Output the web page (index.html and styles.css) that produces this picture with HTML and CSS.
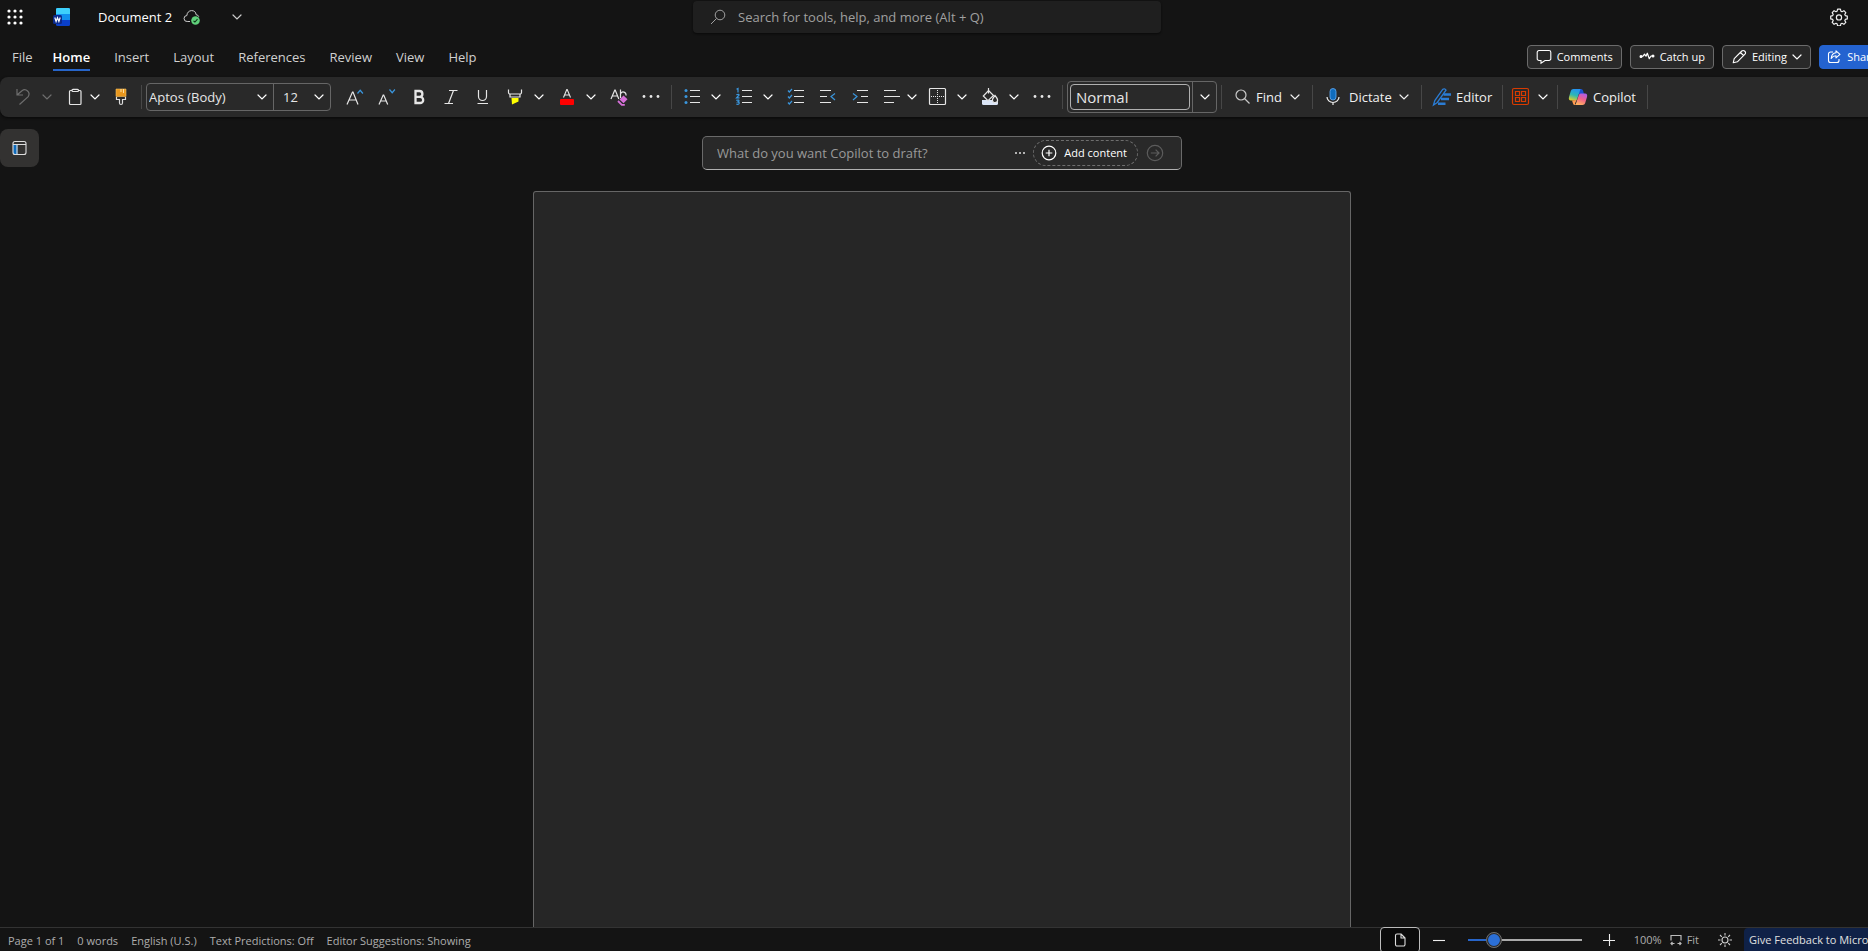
FILE: index.html
```html
<!DOCTYPE html>
<html lang="en">
<head>
<meta charset="utf-8">
<title>Document 2 - Word</title>
<link rel="stylesheet" href="styles.css">
</head>
<body>
<svg class="defs" aria-hidden="true">
  <symbol id="chev" viewBox="0 0 10 10"><path d="M1 3l4 4 4-4" fill="none" stroke="currentColor" stroke-width="1.2" stroke-linecap="round"/></symbol>
  <symbol id="dots" viewBox="0 0 20 20"><circle cx="3" cy="9.5" r="1.4"/><circle cx="10" cy="9.5" r="1.4"/><circle cx="17" cy="9.5" r="1.4"/></symbol>
</svg>
<div class="app">
  <header class="title-bar">
    <div class="title-left">
      <button class="plain waffle" aria-label="App launcher">
        <svg class="i16" viewBox="0 0 16 16" fill="#fff"><circle cx="2" cy="2" r="1.6"/><circle cx="8" cy="2" r="1.6"/><circle cx="14" cy="2" r="1.6"/><circle cx="2" cy="8" r="1.6"/><circle cx="8" cy="8" r="1.6"/><circle cx="14" cy="8" r="1.6"/><circle cx="2" cy="14" r="1.6"/><circle cx="8" cy="14" r="1.6"/><circle cx="14" cy="14" r="1.6"/></svg>
      </button>
      <svg class="logo" viewBox="0 0 18 18"><rect x="3" width="14" height="18" rx="1.5" fill="#0a3fc9"/><path d="M4.500 0h11a1.500 1.500 0 0 1 1.500 1.500V12H3V1.500A1.500 1.500 0 0 1 4.500 0z" fill="#1190ee"/><path d="M4.500 0h11a1.500 1.500 0 0 1 1.500 1.500V6H3V1.500A1.500 1.500 0 0 1 4.500 0z" fill="#3dd0fb"/><rect y="7" width="9" height="9" rx="1.500" fill="#0b2a8c"/><path d="M1.800 9.500l1.300 4 1.400-3.800 1.400 3.800 1.300-4" fill="none" stroke="#fff" stroke-width="1.200"/></svg>
      <button class="plain doc-name">Document 2
        <svg class="cloud" viewBox="0 0 18 16"><path d="M7 12.500H4.200a3 3 0 0 1-.3-6A4.800 4.800 0 0 1 8.500 1.600a4.600 4.600 0 0 1 4.600 4.100 3 3 0 0 1 2.700 2" fill="none" stroke="#ccc"/><circle cx="12.500" cy="11.500" r="4.300" fill="#5fd07a"/><path d="M10.500 11.800l1.400 1.200 2.600-2.800" fill="none" stroke="#10331a" stroke-width="1.100"/></svg>
      </button>
      <button class="plain name-more" aria-label="File name options"><svg class="i10"><use href="#chev"/></svg></button>
    </div>
    <label class="search">
      <svg class="i16" viewBox="0 0 16 16" fill="none" stroke="#a0a0a0"><circle cx="10" cy="6" r="4.800"/><path d="M6.500 9.500L1 15"/></svg>
      <input type="text" aria-label="Search" placeholder="Search for tools, help, and more (Alt + Q)">
    </label>
    <div class="title-right">
      <button class="plain" aria-label="Settings"><svg class="i18" viewBox="0 0 18 18" fill="none" stroke="#f0f0f0" stroke-width="1.200" stroke-linejoin="round"><path d="M7.600 1.200h2.800l.5 2 1.100.5 1.900-1 1.900 1.900-1 1.900.5 1.100 2 .5v2.800l-2 .5-.5 1.100 1 1.900-1.900 1.900-1.900-1-1.100.5-.5 2H7.600l-.5-2-1.100-.5-1.900 1-1.900-1.900 1-1.900-.5-1.100-2-.5V8.100l2-.5.500-1.100-1-1.900 1.900-1.900 1.900 1 1.100-.500z"/><circle cx="9" cy="9.400" r="2.600"/></svg></button>
    </div>
  </header>

  <nav class="tab-bar">
    <div class="tabs">
      <button class="tab file">File</button><button class="tab active">Home</button><button class="tab">Insert</button><button class="tab">Layout</button><button class="tab">References</button><button class="tab">Review</button><button class="tab">View</button><button class="tab">Help</button>
    </div>
    <div class="actions">
      <button class="action"><svg class="i16" viewBox="0 0 16 16" fill="none" stroke="currentColor" stroke-width="1.100"><path d="M3 1.500h10a1.800 1.800 0 0 1 1.800 1.800v6.400A1.800 1.800 0 0 1 13 11.500H9L5 14.300v-2.800H3a1.800 1.800 0 0 1-1.800-1.800V3.300A1.800 1.800 0 0 1 3 1.500z"/></svg>Comments</button>
      <button class="action"><svg class="i16" viewBox="0 0 16 16" fill="none" stroke="currentColor" stroke-width="1.200" stroke-linecap="round" stroke-linejoin="round"><path d="M2 7.500l2-.3 1.500-2 1.500 2M7 7.200l1.300-3 2 5.500 1.700-2.700h2"/><circle cx="2" cy="7.500" r=".9" fill="currentColor"/><circle cx="14" cy="7" r=".9" fill="currentColor"/></svg>Catch up</button>
      <button class="action"><svg class="i16" viewBox="0 0 16 16" fill="none" stroke="currentColor" stroke-width="1.100" stroke-linejoin="round"><path d="M2.200 13.800l1-4.200 7.600-7.600a1.900 1.900 0 0 1 2.700 0l.5.500a1.900 1.900 0 0 1 0 2.700l-7.600 7.600zM9.500 3.500l3 3"/></svg>Editing<svg class="i10"><use href="#chev"/></svg></button>
      <button class="action share"><svg class="i16" viewBox="0 0 16 16" fill="none" stroke="currentColor" stroke-width="1.100" stroke-linejoin="round"><path d="M7 3H4.500A2 2 0 0 0 2.500 5v6.500a2 2 0 0 0 2 2H11a2 2 0 0 0 2-2V10"/><path d="M10 1.800l4 3.500-4 3.500V6.800c-2 0-3.500.7-4.800 2.700.2-3 1.800-5.400 4.800-5.700z"/></svg>Share</button>
    </div>
  </nav>

  <div class="ribbon" role="toolbar" aria-label="Home">
    <div class="split gap dim"><button class="tool" aria-label="Undo"><svg class="i20" viewBox="0 0 20 20" fill="none" stroke="currentColor" stroke-width="1.200"><path d="M4 2v6h6M4.300 7.700L9 3.800a4.300 4.300 0 0 1 6.200 5.800L6.500 17.500"/></svg></button><button class="more" aria-label="Undo options"><svg class="i10"><use href="#chev"/></svg></button></div>
    <div class="split tight"><button class="tool" aria-label="Paste"><svg class="i20" viewBox="0 0 20 20" fill="none" stroke="currentColor" stroke-width="1.200"><path d="M7 3.500H5.500a1 1 0 0 0-1 1v12a1 1 0 0 0 1 1h9.500a1 1 0 0 0 1-1v-12a1 1 0 0 0-1-1H13.500"/><rect x="7" y="2.300" width="6.500" height="2.200" rx="1"/></svg></button><button class="more" aria-label="Paste options"><svg class="i10"><use href="#chev"/></svg></button></div>
    <button class="tool" aria-label="Format painter"><svg class="i20" viewBox="0 0 20 20" fill="none"><path d="M5 2h10v7.500H5z" fill="#e8971e" stroke="#f5c060" stroke-width=".6"/><path d="M10 2v3M12.500 2v4" stroke="#ffe0a0"/><path d="M5.500 10v2.500h3V16a1.500 1.500 0 0 0 3 0v-3.500h3V10" stroke="#ddd" stroke-width="1.200"/></svg></button>
    <span class="rule"></span>
    <div class="combo">
      <input class="font-name" type="text" aria-label="Font" value="Aptos (Body)"><button class="combo-more" aria-label="Choose font"><svg class="i10"><use href="#chev"/></svg></button>
      <input class="font-size" type="text" aria-label="Font size" value="12"><button class="combo-more" aria-label="Choose size"><svg class="i10"><use href="#chev"/></svg></button>
    </div>
    <div class="text-tools">
      <button class="tool" aria-label="Grow font"><svg class="i20" viewBox="0 0 20 20" fill="none" stroke="currentColor" stroke-width="1.200"><path d="M2 17.500L7.500 5h.5l5 12.500M4 13h7.500"/><path d="M12.500 6.500l2.700-3.200 2.700 3.200" stroke="#3a96dd"/></svg></button>
      <button class="tool" aria-label="Shrink font"><svg class="i20" viewBox="0 0 20 20" fill="none" stroke="currentColor" stroke-width="1.200"><path d="M2 17.500L6.200 8h.5l4 9.500M3.500 14h6"/><path d="M12.500 2.500l2.700 3.200 2.700-3.200" stroke="#3a96dd"/></svg></button>
      <button class="tool" aria-label="Bold"><svg class="i20" viewBox="0 0 20 20" fill="none" stroke="currentColor" stroke-width="2.300"><path d="M6.500 4h4a2.900 2.900 0 0 1 0 5.800h-4zM6.500 9.800h4.600a3.100 3.100 0 0 1 0 6.200H6.500z"/></svg></button>
      <button class="tool" aria-label="Italic"><svg class="i20" viewBox="0 0 20 20" fill="none" stroke="currentColor" stroke-width="1.200"><path d="M8 3.500h8.500M3.500 16.500H12M12.500 3.500l-5 13"/></svg></button>
      <button class="tool" aria-label="Underline"><svg class="i20" viewBox="0 0 20 20" fill="none" stroke="currentColor" stroke-width="1.200"><path d="M5.500 3v6.500a4 4 0 0 0 8 0V3M4.500 16.500H15"/></svg></button>
      <div class="split gap"><button class="tool" aria-label="Highlight"><svg class="i20" viewBox="0 0 20 20" fill="none" stroke="currentColor" stroke-width="1.200"><path d="M3.500 2.500v3a1.500 1.500 0 0 0 1.500 1.500h10a1.500 1.500 0 0 0 1.500-1.500v-3M5 7v3h10V7"/><path d="M6.500 11h7v3.500L7 17.500z" fill="#ffff00" stroke="none"/></svg></button><button class="more" aria-label="Highlight colors"><svg class="i10"><use href="#chev"/></svg></button></div>
      <div class="split gap"><button class="tool" aria-label="Font color"><svg class="i20" viewBox="0 0 20 20" fill="none" stroke="currentColor" stroke-width="1.100"><path d="M6.500 10.500L9.800 2.500h.4l3.300 8M7.500 8h5"/><rect x="3" y="12" width="14" height="6" rx="1" fill="#ff0000" stroke="none"/></svg></button><button class="more" aria-label="Font colors"><svg class="i10"><use href="#chev"/></svg></button></div>
      <button class="tool" aria-label="Clear formatting"><svg class="i20" viewBox="0 0 20 20" fill="none" stroke="currentColor" stroke-width="1.200"><path d="M2 12L5.800 3h.4l3.600 9M3.300 9h5.500M11.500 2.500V11M11.500 7a2.800 2.800 0 0 1 5.400 1.500"/><path d="M14.500 8.500l4 3.800-4 4-4-3.800z" fill="#d670d9" stroke="none"/><path d="M9 14l3.800 3.800h3" stroke="#d670d9" stroke-width="1.800"/></svg></button>
      <button class="tool" aria-label="More font options"><svg class="i20" fill="currentColor"><use href="#dots"/></svg></button>
    </div>
    <span class="rule"></span>
    <div class="split gap"><button class="tool" aria-label="Bullets"><svg class="i20" viewBox="0 0 20 20" stroke="currentColor" stroke-width="1.200"><path d="M8 3.500h10M8 9.500h10M8 15.500h10"/><g fill="#3a96dd" stroke="none"><circle cx="4" cy="3.500" r="1.500"/><circle cx="4" cy="9.500" r="1.500"/><circle cx="4" cy="15.500" r="1.500"/></g></svg></button><button class="more" aria-label="Bullet styles"><svg class="i10"><use href="#chev"/></svg></button></div>
    <div class="split gap"><button class="tool" aria-label="Numbering"><svg class="i20" viewBox="0 0 20 20" fill="none" stroke="currentColor" stroke-width="1.200"><path d="M8 3.500h10M8 9.500h10M8 15.500h10"/><path d="M2.500 2.300L4 1.500v4M2.300 7.700q3-1 2.700.5l-2.500 2.700h3M2.300 13.300q3-.8 2.700.8l-1.300.9q2 .2 1.400 1.600-1 1.200-2.800.4" stroke="#3a96dd"/></svg></button><button class="more" aria-label="Number styles"><svg class="i10"><use href="#chev"/></svg></button></div>
    <button class="tool" aria-label="Checklist"><svg class="i20" viewBox="0 0 20 20" fill="none" stroke="currentColor" stroke-width="1.200"><path d="M8 3.500h10M8 9.500h10M8 15.500h10"/><path d="M2 3.500L3.300 5 6 2M2 9.500L3.300 11 6 8M2 15.500L3.300 17 6 14" stroke="#3a96dd"/></svg></button>
    <button class="tool" aria-label="Decrease indent"><svg class="i20" viewBox="0 0 20 20" fill="none" stroke="currentColor" stroke-width="1.200"><path d="M2 3.500h11M2 9.500h7M2 15.500h11"/><path d="M17 6.500l-4 3 4 3.500" stroke="#3a96dd"/></svg></button>
    <button class="tool" aria-label="Increase indent"><svg class="i20" viewBox="0 0 20 20" fill="none" stroke="currentColor" stroke-width="1.200"><path d="M7 3.500h11M11 9.500h7M7 15.500h11"/><path d="M3 6.500l4 3-4 3.500" stroke="#3a96dd"/></svg></button>
    <div class="split tight"><button class="tool" aria-label="Align"><svg class="i20" viewBox="0 0 20 20" stroke="currentColor" stroke-width="1.200"><path d="M2 3.500h12M2 9.500h16M2 15.500h10"/></svg></button><button class="more" aria-label="Alignment options"><svg class="i10"><use href="#chev"/></svg></button></div>
    <div class="split gap"><button class="tool" aria-label="Borders"><svg class="i20" viewBox="0 0 20 20" fill="none" stroke="currentColor" stroke-width="1.200"><rect x="1.500" y="1.500" width="16" height="16" rx="1"/><path d="M9.500 3v13M3 9.500h13" stroke-width="1" stroke-dasharray="1 1"/></svg></button><button class="more" aria-label="Border options"><svg class="i10"><use href="#chev"/></svg></button></div>
    <div class="split gap"><button class="tool" aria-label="Shading"><svg class="i20" viewBox="0 0 20 20" fill="none" stroke="currentColor" stroke-width="1.200"><path d="M2 13h16v3.500a1.500 1.500 0 0 1-1.500 1.500h-13A1.500 1.500 0 0 1 2 16.500z" fill="#dbe5f7" stroke="none"/><path d="M8.500 3.500l5 5-5.500 5.200-4.700-4.700z" fill="#292929"/><path d="M8.500 1v5.500"/><path d="M15 8.500q2.600 3 2.600 4.500a2.500 2.500 0 0 1-5.200 0q0-1.500 2.600-4.500z" fill="#292929"/></svg></button><button class="more" aria-label="Shading colors"><svg class="i10"><use href="#chev"/></svg></button></div>
    <button class="tool" aria-label="More paragraph options"><svg class="i20" fill="currentColor"><use href="#dots"/></svg></button>
    <span class="rule"></span>
    <div class="styles"><input type="text" aria-label="Style" value="Normal"><button class="styles-more" aria-label="Choose style"><svg class="i10"><use href="#chev"/></svg></button></div>
    <span class="rule"></span>
    <button class="wide find"><svg class="i20" viewBox="0 0 20 20" fill="none" stroke="#c8c8c8" stroke-width="1.200"><circle cx="9" cy="8" r="5"/><path d="M12.500 11.500l5 5"/></svg><span>Find</span><svg class="i10"><use href="#chev"/></svg></button>
    <span class="rule"></span>
    <button class="wide dictate"><svg class="i20" viewBox="0 0 20 20" fill="none" stroke="currentColor" stroke-width="1.200"><rect x="7" y="1.500" width="6" height="11.500" rx="3" fill="#0f6cbd" stroke="#62abf5" stroke-width=".8"/><path d="M4 10a6 5.500 0 0 0 12 0M10 15.500V18"/></svg><span>Dictate</span><svg class="i10"><use href="#chev"/></svg></button>
    <span class="rule"></span>
    <button class="wide editor"><svg class="i20" viewBox="0 0 20 20" fill="none" stroke="#2b7cd3" stroke-width="1.300"><path d="M1.500 18l1.300-4.500L10.500 2.600q2-1.800 3.500.6L5.300 15.500z"/><path d="M11.500 7.500H19M9 12h8M6 16.700h7.500" stroke-width="2.600"/></svg><span>Editor</span></button>
    <span class="rule"></span>
    <div class="split addins"><button class="tool" aria-label="Add-ins"><svg class="i20" viewBox="0 0 20 20" fill="none" stroke="#d83b01" stroke-width="1.200"><rect x="1.500" y="1.500" width="16" height="16" rx="1.500"/><path d="M4.500 4.500h4v4h-4zM10.500 4.500h4v4h-4zM4.500 10.500h4v4h-4zM10.500 10.500h4v4h-4z"/></svg></button><button class="more" aria-label="Add-in options"><svg class="i10"><use href="#chev"/></svg></button></div>
    <span class="rule"></span>
    <button class="wide copilot"><svg class="i20" viewBox="0 0 20 20"><defs><linearGradient id="cpA" x1=".5" y1="0" x2=".2" y2="1"><stop offset="0" stop-color="#2493f0"/><stop offset=".5" stop-color="#2db8b5"/><stop offset="1" stop-color="#e8d020"/></linearGradient><linearGradient id="cpB" x1=".8" y1="0" x2=".4" y2="1"><stop offset="0" stop-color="#a95cf0"/><stop offset=".5" stop-color="#f0608c"/><stop offset="1" stop-color="#ffb060"/></linearGradient></defs><path d="M11 2h2a2 2 0 0 1 2 1.500L16 7h-5z" fill="#1b50d0"/><path d="M5.500 2h7L9.200 12a2 2 0 0 1-2 1.500H3c-2 0-2.500-1.500-2-3.500l1.800-6C3.300 2.700 4 2 5.500 2z" fill="url(#cpA)"/><path d="M8.500 13L7 16.500a2 2 0 0 0 2 1.500h-2a2 2 0 0 1-2-1.500l-1-3z" fill="#ff9b50"/><path d="M14.500 18h-7L10.800 8a2 2 0 0 1 2-1.500H17c2 0 2.500 1.500 2 3.500l-1.800 6c-.5 1.300-1.200 2-2.700 2z" fill="url(#cpB)"/></svg><span>Copilot</span></button>
    <span class="rule"></span>
  </div>

  <main class="workspace">
    <button class="nav-toggle" aria-label="Navigation pane"><svg class="i16" viewBox="0 0 16 16" fill="none" stroke="#ddd" stroke-width="1.100"><path d="M1 4.500h4.500v10H3a2 2 0 0 1-2-2z" fill="#0f6cbd" stroke="none"/><rect x="1" y="1.500" width="13" height="13" rx="2"/><path d="M1 4.500h13M5 4.500v10"/></svg></button>
    <form class="draft">
      <input type="text" aria-label="Copilot prompt" placeholder="What do you want Copilot to draft?">
      <button type="button" class="plain" aria-label="More"><svg class="i10" viewBox="0 0 10 10" fill="#e0e0e0"><circle cx="1" cy="5" r="1"/><circle cx="5" cy="5" r="1"/><circle cx="9" cy="5" r="1"/></svg></button>
      <button type="button" class="add"><svg class="i16" viewBox="0 0 16 16" fill="none" stroke="currentColor" stroke-width="1.200"><circle cx="8" cy="8" r="6.800"/><path d="M8 4.700v6.600M4.700 8h6.600"/></svg>Add content</button>
      <button type="button" class="plain send" aria-label="Send"><svg class="i18" viewBox="0 0 18 18" fill="none" stroke="currentColor" stroke-width="1.200"><circle cx="9" cy="9" r="7.700"/><path d="M4.800 9h8M9.600 5.600L13 9l-3.400 3.400"/></svg></button>
    </form>
    <article class="page" contenteditable="true" aria-label="Document"></article>
  </main>

  <footer class="status">
    <div class="status-left"><button>Page 1 of 1</button><button>0 words</button><button>English (U.S.)</button><button>Text Predictions: Off</button><button>Editor Suggestions: Showing</button></div>
    <div class="status-right">
      <button class="view" aria-label="Print view"><svg class="i16" viewBox="0 0 16 16" fill="none" stroke="#ddd" stroke-width="1.100" stroke-linejoin="round"><path d="M9 2H5a1.500 1.500 0 0 0-1.500 1.500v9A1.500 1.500 0 0 0 5 14h6.500a1.500 1.500 0 0 0 1.500-1.500V6zM9 2v4h4"/></svg></button>
      <button class="zoom-step" aria-label="Zoom out"><svg viewBox="0 0 12 12" class="i12" stroke="#eee" stroke-width="1.100"><path d="M0 6.500h12"/></svg></button>
      <input class="zoom" type="range" min="10" max="500" value="100" aria-label="Zoom">
      <button class="zoom-step" aria-label="Zoom in"><svg viewBox="0 0 12 12" class="i12" stroke="#eee" stroke-width="1.100"><path d="M0 6.500h12M6.500 0v12"/></svg></button>
      <button class="percent">100%</button>
      <button class="fit"><svg viewBox="0 0 12 12" class="i12" fill="none" stroke="#bbb" stroke-width="1.200"><path d="M1 6.500V1.500h10v5M4.500 9.500H1M11 9.500H7.500M2.500 8L1 9.500 2.500 11M9.500 8L11 9.500 9.500 11"/></svg>Fit</button>
      <button class="sun" aria-label="Switch background"><svg viewBox="0 0 16 16" class="i16" fill="none" stroke="#ccc" stroke-width="1.100"><circle cx="8" cy="8" r="3"/><path d="M8 1v2.500M8 12.500V15M1 8h2.500M12.500 8H15M3 3l1.800 1.800M11.200 11.200L13 13M3 13l1.800-1.800M11.200 4.800L13 3"/></svg></button>
      <button class="feedback">Give Feedback to Microsoft</button>
    </div>
  </footer>
</div>
</body>
</html>
```
FILE: styles.css
```css
* { box-sizing: border-box; }
html, body { height: 100%; margin: 0; overflow: hidden; }
body { background: #141414; color: #e6e6e6; font: 13px/18px "Open Sans", "Noto Sans", sans-serif; }
button, input { font: inherit; color: inherit; margin: 0; padding: 0; border: 0; background: none; }
button { display: flex; align-items: center; justify-content: center; white-space: nowrap; }
input { min-width: 0; outline: 0; }
svg { flex: none; display: block; }
.defs { position: absolute; width: 0; height: 0; }
.i10 { width: 10px; height: 10px; }
.i12 { width: 12px; height: 12px; }
.i16 { width: 16px; height: 16px; }
.i18 { width: 18px; height: 18px; }
.i20 { width: 20px; height: 20px; }

/* The shell runs slightly past the right edge of the window. */
.app { display: flex; flex-direction: column; width: calc(100% + 16px); height: 100%; }

.title-bar { display: grid; grid-template-columns: 1fr 468px 1fr; align-items: center; height: 34px; padding-right: 30px; }
.title-left { display: flex; align-items: center; padding-left: 7px; }
.logo { width: 18px; height: 18px; margin-left: 30px; }
.doc-name { margin-left: 27px; gap: 11px; color: #fff; }
.cloud { width: 18px; height: 16px; }
.name-more { margin-left: 31px; color: #ccc; }
.search { display: flex; align-items: center; gap: 12px; height: 32px; padding: 0 17px; border-radius: 4px; background: #1f1f1f; box-shadow: 0 1px 2px #0a0a0a; }
.search input { flex: 1; }
.search input::placeholder { color: #a0a0a0; opacity: 1; }
.title-right { display: flex; justify-content: flex-end; padding-right: 6px; }

.tab-bar { display: flex; justify-content: space-between; height: 43px; }
.tabs { display: flex; gap: 24px; padding: 12px 0 6px 12px; align-items: flex-start; }
.tab { height: 25px; padding-bottom: 1px; border-bottom: 2px solid transparent; color: #d0d0d0; }
.tab.file { margin-right: -4px; }
.tab.active { color: #fff; font-weight: 600; border-color: #2765c9; }
.actions { display: flex; gap: 8px; padding-top: 11px; align-items: flex-start; }
.action { height: 24px; padding: 0 8px; gap: 5px; border: 1px solid #6b6b6b; border-radius: 4px; background: #292929; color: #fff; font-size: 11px; }
.share { width: 65px; background: #2463d0; border-color: #2463d0; }

.ribbon { display: flex; align-items: center; height: 40px; padding-left: 7px; border-radius: 8px 0 0 8px; background: #292929; box-shadow: 0 1px 3px #080808; }
.split, .text-tools { display: flex; flex: none; }
.tool { width: 32px; height: 32px; flex: none; }
.more { width: 16px; height: 32px; color: #fff; }
.gap { margin-right: 4px; }
.tight { margin-right: 2px; }
.tight .tool { width: 28px; padding-left: 4px; }
.dim, .dim .more { color: #6e6e6e; }
.rule { flex: none; width: 1px; height: 24px; margin: 0 4px; background: #474747; }
.combo { display: flex; width: 185px; height: 28px; flex: none; border: 1px solid #666; border-radius: 4px; }
.font-name { width: 103px; padding-left: 2px; }
.font-size { width: 34px; padding-left: 9px; border-left: 1px solid #666; }
.combo-more { width: 23px; color: #fff; }
.text-tools { margin-left: 8px; }
.styles { display: flex; width: 150px; height: 32px; flex: none; padding: 2px 0 2px 2px; border: 1px solid #666; border-radius: 4px; }
.styles input { width: 120px; padding-left: 5px; border: 1px solid #b0b0b0; border-radius: 4px; font-size: 15px; }
.styles-more { flex: 1; margin: -2px 0 -2px 2px; border-left: 1px solid #666; color: #fff; }
.wide { flex: none; height: 32px; gap: 6px; color: #f0f0f0; justify-content: flex-start; }
.wide .i10 { margin-left: auto; }
.find { width: 82px; padding: 0 8px 0 6px; gap: 4px; }
.dictate { width: 100px; padding: 0 8px 0 6px; }
.editor { width: 72px; padding-left: 6px; gap: 4px; }
.addins { margin-right: 2px; }
.addins .tool { width: 28px; }
.copilot { width: 81px; padding-left: 6px; gap: 5px; }

.workspace { position: relative; display: flex; flex: 1; min-height: 0; flex-direction: column; align-items: center; gap: 21px; padding-top: 19px; }
.nav-toggle { position: absolute; left: 0; top: 12px; width: 39px; height: 38px; border-radius: 8px; background: #333231; }
.draft { display: flex; align-items: center; width: 480px; height: 34px; padding: 0 17px 0 14px; border: 1px solid #6a6a6a; border-bottom-color: #b0b0b0; border-radius: 5px; background: #292929; }
.draft input { flex: 1; }
.draft input::placeholder { color: #999; opacity: 1; }
.add { height: 26px; margin: 0 8px; padding: 0 10px 0 7px; gap: 7px; border: 1px dashed #6e6e6e; border-radius: 13px; color: #fff; font-size: 11px; }
.send { color: #5c5c5c; }
.page { width: 818px; flex: 1; border: 1px solid #666; border-bottom: 0; border-radius: 3px 3px 0 0; background: #262626; }

.status { display: flex; justify-content: space-between; height: 24px; border-top: 1px solid #333; color: #adadad; font-size: 11px; }
.status-left { display: flex; gap: 13px; padding: 3px 0 0 8px; }
.status-right { display: flex; align-items: center; }
.view { width: 40px; height: 26px; margin-right: 12px; border: 1px solid #bbb; border-radius: 4px; background: #0a0a0a; }
.zoom-step { width: 14px; height: 20px; }
.zoom { width: 114px; height: 16px; margin: 0 20px 0 22px; appearance: none; }
.zoom::-webkit-slider-runnable-track { height: 2px; background: linear-gradient(90deg, #2765c9 22%, #aaa 22%); }
.zoom::-webkit-slider-thumb { appearance: none; width: 16px; height: 16px; margin-top: -7px; border: 2px solid #292929; outline: 1px solid #6e6e6e; outline-offset: -1px; border-radius: 50%; background: #2b6fd6; }
.percent { margin-left: 18px; }
.fit { margin-left: 8px; gap: 5px; }
.sun { margin-left: 18px; }
.feedback { width: 140px; height: 23px; margin-left: 11px; padding-left: 5px; justify-content: flex-start; border-radius: 4px 0 0 0; background: #0f2147; color: #e0e0e0; }
```
